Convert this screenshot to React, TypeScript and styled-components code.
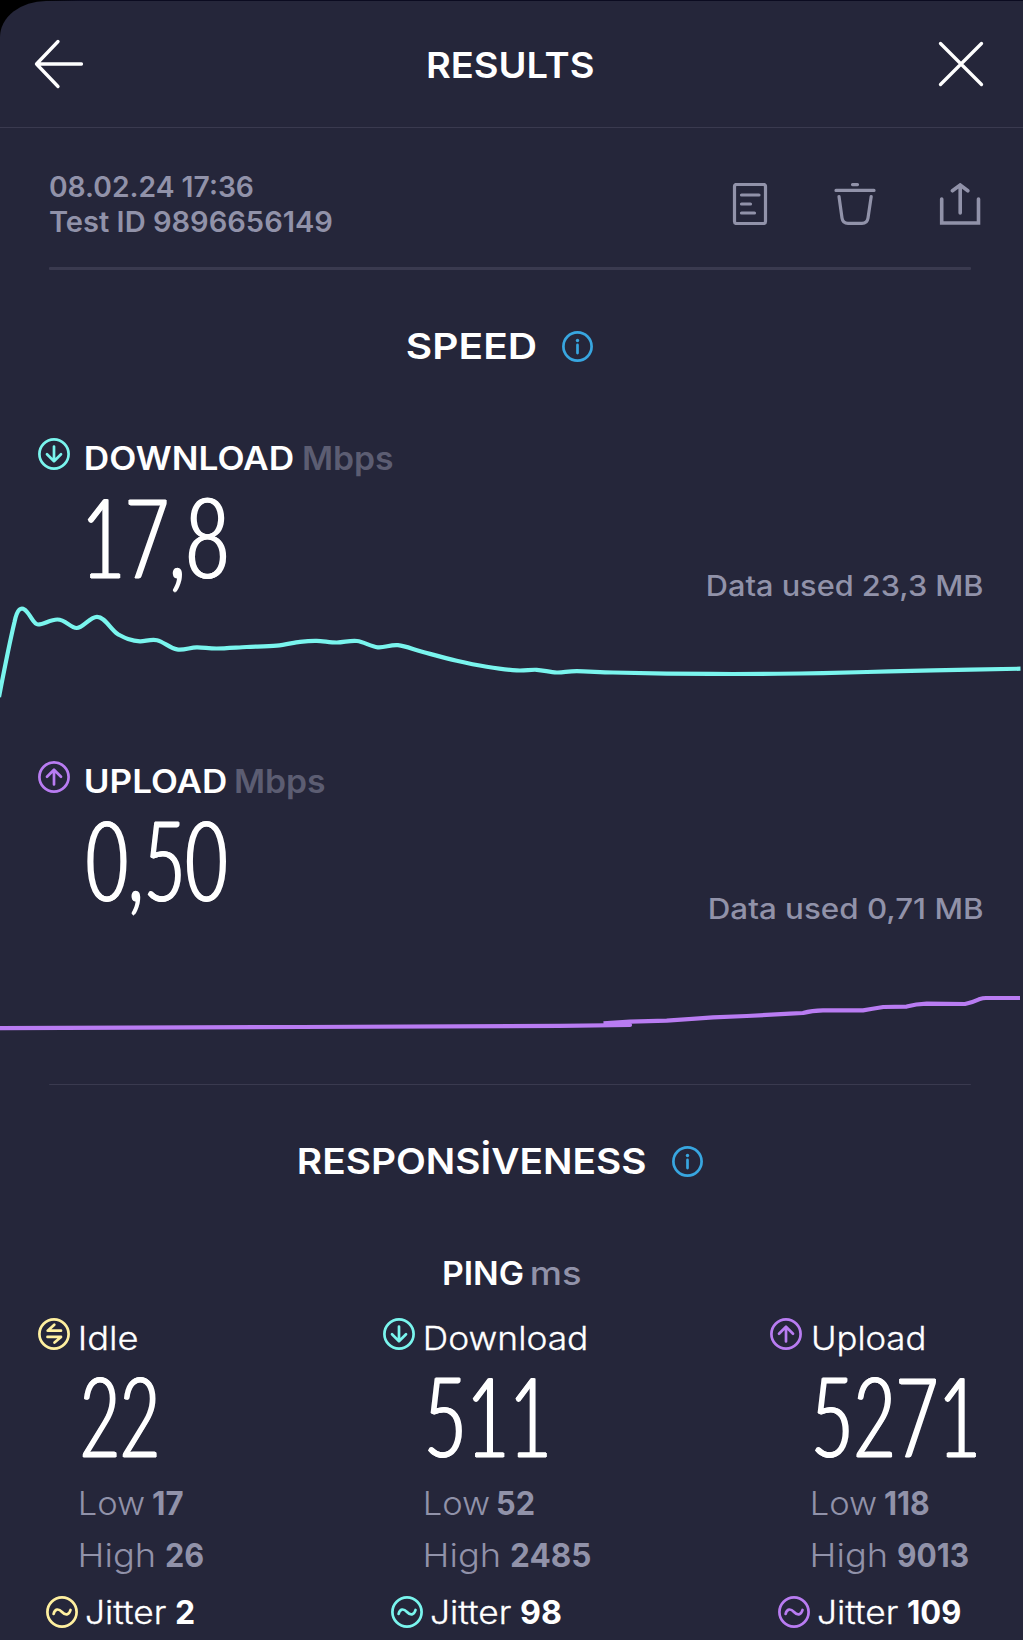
import React, { useMemo } from "react";
import styled, { createGlobalStyle } from "styled-components";

const colors = {
  sheet: "#25263a",
  line: "#3a3a4f",
  white: "#ffffff",
  muted: "#9192a9",
  faint: "#5c5d72",
  teal: "#7af5ee",
  purple: "#b97cf2",
  yellow: "#fff0a0",
  blue: "#38a6e0",
};

const textFamily = 'Inter, "Liberation Sans", sans-serif';
const digitFamily = 'Lato, "Liberation Sans", sans-serif';

const GlobalStyle = createGlobalStyle`
  *, *::before, *::after { box-sizing: border-box; }
  body { margin: 0; background: #000; font-family: ${textFamily}; }
`;

/* ---------- text ---------- */

const TextBox = styled.span<{ $width: number; $height: number }>`
  display: block;
  flex: none;
  width: ${(p) => p.$width}px;
  height: ${(p) => p.$height}px;
`;

const TextInk = styled.span<{
  $size: number;
  $weight: number;
  $color: string;
  $family: string;
  $height: number;
  $outline: number;
  $spread: number;
}>`
  display: inline-block;
  white-space: pre;
  transform-origin: 0 50%;
  font-family: ${(p) => p.$family};
  font-size: ${(p) => p.$size}px;
  font-weight: ${(p) => p.$weight};
  line-height: ${(p) => p.$height}px;
  color: ${(p) => p.$color};
  -webkit-text-stroke: ${(p) => p.$outline}px ${(p) => p.$color};
  text-shadow: ${(p) => (p.$spread ? `${p.$spread}px 0 ${p.$color}, -${p.$spread}px 0 ${p.$color}` : "none")};
`;

interface LabelProps {
  children: string;
  width: number;
  size?: number;
  weight?: number;
  color?: string;
  family?: string;
  height?: number;
  outline?: number;
  spread?: number;
}

/* Text whose glyphs are stretched to fill the given width exactly. */
function Label({
  children,
  width,
  size = 32,
  weight = 600,
  color = colors.white,
  family = textFamily,
  height = 40,
  outline = 0,
  spread = 0,
}: LabelProps) {
  const transform = useMemo(() => {
    const ctx = document.createElement("canvas").getContext("2d");
    if (!ctx) return "none";
    ctx.font = `${weight} ${size}px ${family}`;
    const m = ctx.measureText(children);
    const edge = outline / 2 + spread;
    const scale = width / (m.actualBoundingBoxRight + m.actualBoundingBoxLeft + edge * 2);
    return `translateX(${(m.actualBoundingBoxLeft + edge) * scale}px) scaleX(${scale})`;
  }, [children, width, size, weight, family, outline, spread]);
  return (
    <TextBox $width={width} $height={height}>
      <TextInk
        $size={size}
        $weight={weight}
        $color={color}
        $family={family}
        $height={height}
        $outline={outline}
        $spread={spread}
        style={{ transform }}
      >
        {children}
      </TextInk>
    </TextBox>
  );
}

const Digits = ({ children, width }: { children: string; width: number }) => (
  <Label width={width} size={111.5} weight={300} family={digitFamily} height={84} outline={1.2} spread={1.8}>
    {children}
  </Label>
);

/* ---------- icons ---------- */

const Glyph = styled.svg<{ $raise?: number }>`
  display: block;
  flex: none;
  fill: none;
  stroke-linecap: round;
  stroke-linejoin: round;
  margin-bottom: ${(p) => (p.$raise ?? 0) * 2}px;
`;

const badgePaths = {
  down: "M0-7.5V7.2M-7 .3L0 7.2L7 .3",
  up: "M0 7.5V-7.2M-7-.3L0-7.2L7-.3",
  idle: "M7-3.3H-6.3L.3-9.3M-6.5 2.9H7L.5 8.6",
  wave: "M-8.4 2C-7.2-3.6-3.4-3.6 0 0S7 3.4 8.5-2",
};

function Badge({ kind, color, raise }: { kind: keyof typeof badgePaths; color: string; raise?: number }) {
  return (
    <Glyph width="32" height="32" viewBox="-16 -16 32 32" stroke={color} strokeWidth="2.7" $raise={raise}>
      <circle r="14.6" />
      <path d={badgePaths[kind]} />
    </Glyph>
  );
}

const InfoIcon = () => (
  <Glyph width="31" height="31" viewBox="-15.5 -15.5 31 31" stroke={colors.blue} strokeWidth="2.7">
    <circle r="14.1" />
    <path d="M0-1.6V6.6" />
    <circle cy="-6" r="1.7" fill={colors.blue} stroke="none" />
  </Glyph>
);

/* ---------- layout ---------- */

const Screen = styled.main`
  width: 1023px;
  height: 1640px;
  overflow: hidden;
  padding-top: 1px;
  background: linear-gradient(90deg, #000 40px, #0b0b20 80px);
`;

const Sheet = styled.div`
  height: 1639px;
  background: ${colors.sheet};
  border-top-left-radius: 46px 36px;
`;

const Header = styled.header`
  display: grid;
  grid-template-columns: 1fr auto 1fr;
  align-items: center;
  height: 127px;
  padding: 0 38px 0 34px;
  border-bottom: 1px solid ${colors.line};
`;

const TitleSlot = styled.div`
  padding: 1px 0 0 2px;
`;

const EndSlot = styled.div`
  justify-self: end;
  padding-bottom: 1px;
`;

const Meta = styled.section`
  display: flex;
  justify-content: space-between;
  align-items: flex-start;
  height: 139px;
  padding: 41.5px 42px 0 50px;
`;

const Actions = styled.div`
  display: flex;
  gap: 63px;
  align-items: center;
  height: 69px;
`;

const Divider = styled.hr<{ $thickness: number }>`
  height: ${(p) => p.$thickness}px;
  margin: 0 52px 0 49px;
  border: 0;
  border-radius: 1px;
  background: ${colors.line};
`;

const SectionTitle = styled.div<{ $inset: number; $gap: number }>`
  display: flex;
  justify-content: center;
  align-items: center;
  gap: ${(p) => p.$gap}px;
  height: 153px;
  padding-right: ${(p) => p.$inset}px;
  padding-bottom: 1px;
`;

const MetricName = styled.div`
  display: flex;
  align-items: center;
  height: 69px;
  padding-left: 38px;
`;

const Unit = styled.div<{ $gap: number }>`
  margin-left: ${(p) => p.$gap}px;
  padding-top: 2px;
`;

const MetricValue = styled.div`
  display: flex;
  justify-content: space-between;
  height: 110px;
  padding: 1px 41.5px 0 87px;
`;

const DataUsed = styled.div`
  align-self: flex-end;
`;

const ChartLine = styled.svg`
  display: block;
  overflow: visible;
  fill: none;
  stroke-width: 4.2;
  stroke-linejoin: round;
`;

const PingTitle = styled.div`
  display: flex;
  justify-content: center;
  align-items: center;
  gap: 9px;
  height: 69px;
  padding-top: 2px;
`;

const PingGrid = styled.div`
  display: grid;
  grid-template-columns: 345px 387px 1fr;
  padding-left: 38px;
`;

const PingName = styled.div`
  display: flex;
  align-items: center;
  height: 61px;
`;

const PingValue = styled.div`
  height: 109.5px;
  padding: 4px 0 0 44px;
`;

const PingStat = styled.div<{ $gap: number }>`
  display: flex;
  align-items: center;
  gap: ${(p) => p.$gap}px;
  height: 52px;
  padding-left: 43px;
`;

const JitterRow = styled.div`
  display: flex;
  align-items: center;
  height: 58px;
  padding: 3px 0 0 8px;
`;

/* ---------- charts ---------- */

type Point = [number, number];

function smooth(points: Point[]): string {
  const at = (i: number) => points[Math.max(0, Math.min(points.length - 1, i))];
  let d = `M${points[0][0]} ${points[0][1]}`;
  for (let i = 0; i < points.length - 1; i++) {
    const [a, b, c, e] = [at(i - 1), at(i), at(i + 1), at(i + 2)];
    d += `C${b[0] + (c[0] - a[0]) / 6} ${b[1] + (c[1] - a[1]) / 6} ${c[0] - (e[0] - b[0]) / 6} ${
      c[1] - (e[1] - b[1]) / 6
    } ${c[0]} ${c[1]}`;
  }
  return d;
}

const downloadHead =
  "M-1 95C4 69 9 43 14.5 20C17 8 21 2 27.5 10.5C32 16 34 22.5 38 22.5C44 22.5 50 17.5 57.3 17.5C66 17.5 70 26 76.7 26C83 26 90 14.8 97 14.8C105 14.8 110 27 118 32.3";

const downloadTail: Point[] = [
  [118, 32.3], [128, 37], [140, 39.3], [157, 38.2], [177, 47.4], [196.7, 45.3], [216.7, 46.5], [246.7, 45],
  [276.7, 43.6], [300, 39.8], [316.7, 38.8], [336.7, 40.5], [357, 39], [377.7, 45.3], [398, 43.2],
  [423, 50], [456.7, 58.7], [486.7, 64.7], [516.7, 68.4], [536.7, 67.8], [556.7, 70.5], [576.7, 69.2],
  [613, 70.5], [666.7, 71.6], [733, 72], [800, 71.5], [867, 70], [933, 68.4], [1020.5, 66.7],
];

const uploadTail =
  "M603.5 98.3L630 96.6L666.7 95.7L713 92.4L746.7 91L790 88.7L803 88Q812 85.3 823 85.3H863Q872 84 883.3 82L906.7 81.6Q916 79 926.7 78.7L965 79Q972 77.5 979 74.3Q983 73 986 73H1020";

/* ---------- ping columns ---------- */

interface PingColumn {
  kind: keyof typeof badgePaths;
  color: string;
  name: [string, number];
  value: [string, number];
  low: [string, number];
  high: [string, number];
  jitter: [string, number];
}

const pings: PingColumn[] = [
  { kind: "idle", color: colors.yellow, name: ["Idle", 56], value: ["22", 75.5], low: ["17", 30], high: ["26", 37.5], jitter: ["2", 18] },
  { kind: "down", color: colors.teal, name: ["Download", 160], value: ["511", 120.5], low: ["52", 36], high: ["2485", 79], jitter: ["98", 40] },
  { kind: "up", color: colors.purple, name: ["Upload", 111], value: ["5271", 162.5], low: ["118", 44], high: ["9013", 70.5], jitter: ["109", 52.5] },
];

export default function App() {
  return (
    <Screen>
      <GlobalStyle />
      <Sheet>
        <Header>
          <Glyph width="50" height="50" viewBox="0 0 50 50" stroke="#fff" strokeWidth="3.3">
            <path d="M24 2.5L2.5 25L24 47.5M2.5 25H47.5" />
          </Glyph>
          <TitleSlot>
            <Label width={165} size={36}>RESULTS</Label>
          </TitleSlot>
          <EndSlot>
            <Glyph width="48" height="48" viewBox="0 0 48 48" stroke="#fff" strokeWidth="3.3">
              <path d="M3.5 3.5L44.5 44.5M44.5 3.5L3.5 44.5" />
            </Glyph>
          </EndSlot>
        </Header>

        <Meta>
          <div>
            <Label width={203} size={28} weight={560} color={colors.muted} height={35}>08.02.24 17:36</Label>
            <Label width={282} size={28} weight={560} color={colors.muted} height={35}>Test ID 9896656149</Label>
          </div>
          <Actions>
            <Glyph width="42" height="42" viewBox="0 0 42 42" stroke={colors.muted} strokeWidth="3.2">
              <rect x="5.5" y="1.5" width="31" height="39" rx="2" />
              <path d="M12.5 12H30M12.5 21H21.5M12.5 30H25.5" />
            </Glyph>
            <Glyph width="42" height="42" viewBox="0 0 42 42" stroke={colors.muted} strokeWidth="3.2">
              <path d="M18.5 1.6H23.5M2 7.4H40M5 13.5L8 35C8.6 39 11 40.4 14 40.4H28C31 40.4 33.4 39 34 35L37.2 13.5" />
            </Glyph>
            <Glyph width="42" height="42" viewBox="0 0 42 42" stroke={colors.muted} strokeWidth="3.6">
              <path d="M2.7 16V40H39.5V16M21.2 30V2.4M13.4 7.8L21.2 2L28.8 7.8" strokeLinejoin="miter" />
            </Glyph>
          </Actions>
        </Meta>
        <Divider $thickness={3} />

        <SectionTitle $inset={24} $gap={26}>
          <Label width={129} size={36}>SPEED</Label>
          <InfoIcon />
        </SectionTitle>

        <section>
          <MetricName>
            <Badge kind="down" color={colors.teal} raise={3.5} />
            <Unit $gap={15.5}>
              <Label width={207}>DOWNLOAD</Label>
            </Unit>
            <Unit $gap={11.5}>
              <Label width={89} color={colors.faint}>Mbps</Label>
            </Unit>
          </MetricName>
          <MetricValue>
            <Digits width={139.5}>17,8</Digits>
            <DataUsed>
              <Label width={274} size={28} weight={550} color={colors.muted} height={32}>Data used 23,3 MB</Label>
            </DataUsed>
          </MetricValue>
          <ChartLine width="1023" height="144" viewBox="0 0 1023 144" stroke={colors.teal}>
            <path d={downloadHead + smooth(downloadTail).replace(/^M[^C]+/, "")} />
          </ChartLine>
        </section>

        <section>
          <MetricName>
            <Badge kind="up" color={colors.purple} raise={3.5} />
            <Unit $gap={15.5}>
              <Label width={140}>UPLOAD</Label>
            </Unit>
            <Unit $gap={10.5}>
              <Label width={89} color={colors.faint}>Mbps</Label>
            </Unit>
          </MetricName>
          <MetricValue>
            <Digits width={139.5}>0,50</Digits>
            <DataUsed>
              <Label width={272} size={28} weight={550} color={colors.muted} height={32}>Data used 0,71 MB</Label>
            </DataUsed>
          </MetricValue>
          <ChartLine width="1023" height="159" viewBox="0 0 1023 159" stroke={colors.purple}>
            <path d="M0 103.2L300 102L560 100.8L630 100" strokeLinecap="round" />
            <path d={uploadTail} />
          </ChartLine>
        </section>
        <Divider $thickness={1} />

        <SectionTitle $inset={21} $gap={27}>
          <Label width={346} size={36}>RESPONSİVENESS</Label>
          <InfoIcon />
        </SectionTitle>

        <PingTitle>
          <Label width={79}>PING</Label>
          <Label width={48} weight={500} color={colors.muted}>ms</Label>
        </PingTitle>

        <PingGrid>
          {pings.map((p) => (
            <div key={p.kind}>
              <PingName>
                <Badge kind={p.kind} color={p.color} raise={3.5} />
                <Unit $gap={11}>
                  <Label width={p.name[1]} weight={300} outline={0.3}>{p.name[0]}</Label>
                </Unit>
              </PingName>
              <PingValue>
                <Digits width={p.value[1]}>{p.value[0]}</Digits>
              </PingValue>
              <PingStat $gap={9}>
                <Label width={63} weight={300} color={colors.muted}>Low</Label>
                <Label width={p.low[1]} weight={650} color={colors.muted}>{p.low[0]}</Label>
              </PingStat>
              <PingStat $gap={12}>
                <Label width={73} weight={300} color={colors.muted}>High</Label>
                <Label width={p.high[1]} weight={650} color={colors.muted}>{p.high[0]}</Label>
              </PingStat>
              <JitterRow>
                <Badge kind="wave" color={p.color} />
                <Unit $gap={8}>
                  <Label width={80} weight={300} outline={0.3}>Jitter</Label>
                </Unit>
                <Unit $gap={10}>
                  <Label width={p.jitter[1]} weight={700}>{p.jitter[0]}</Label>
                </Unit>
              </JitterRow>
            </div>
          ))}
        </PingGrid>
      </Sheet>
    </Screen>
  );
}
